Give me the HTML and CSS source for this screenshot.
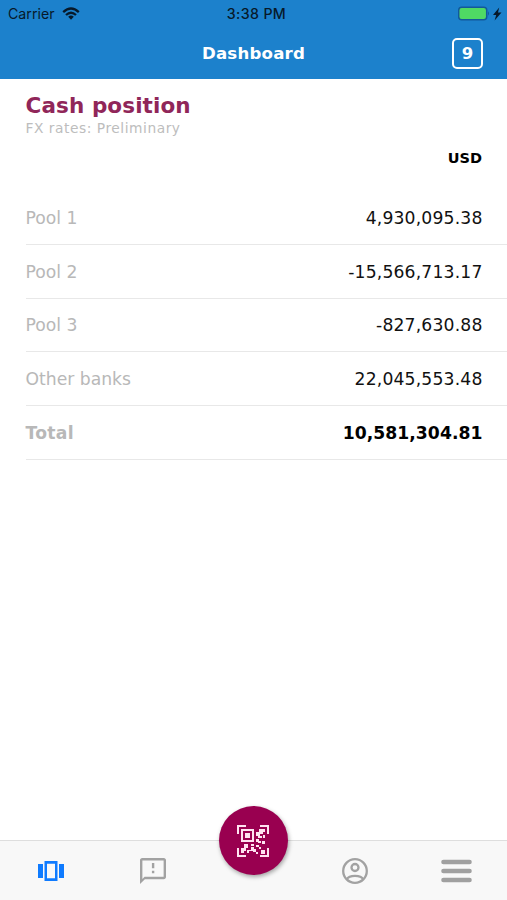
FILE: index.html
```html
<!DOCTYPE html>
<html lang="en">
<head>
  <meta charset="UTF-8" />
  <meta name="viewport" content="width=device-width, initial-scale=1.0" />
  <title>Dashboard</title>
  <link rel="stylesheet" href="styles.css">
</head>
<body>
  <header class="header">
    <div class="status">
      <div class="carrier">
        <span>Carrier</span>
        <svg width="18" height="13" viewBox="0 0 18 13" fill="none" stroke="#07192a" stroke-width="2.3">
          <path d="M1.2 5.1Q9 -2 16.8 5.1" />
          <path d="M4 8Q9 3.5 14 8" />
          <path d="M6.2 9.8Q9 7.3 11.8 9.8L9 12.7Z" fill="#07192a" stroke="none" />
        </svg>
      </div>
      <div class="time">3:38 PM</div>
      <div class="power">
        <svg width="44" height="16" viewBox="0 0 44 16">
          <rect x="0.7" y="1.2" width="28" height="12.6" rx="3" fill="#4fd964" stroke="#12599a" stroke-width="1.5" />
          <path d="M30 5.3Q32 7.5 30 9.7Z" fill="#12599a" />
          <path d="M41.2 1.6L35 8.9h3.2L36.600 14.400l6.900-8H40Z" fill="#07192a" />
        </svg>
      </div>
    </div>
    <div class="navbar">
      <h1 class="title">Dashboard</h1>
      <div class="counter">9</div>
    </div>
  </header>

  <main class="content">
    <h2 class="heading">Cash position</h2>
    <div class="subheading">FX rates: Preliminary</div>
    <div class="currency">USD</div>
    <div class="rows">
      <div class="row"><span class="label">Pool 1</span><span class="amount">4,930,095.38</span></div>
      <div class="row"><span class="label">Pool 2</span><span class="amount">-15,566,713.17</span></div>
      <div class="row"><span class="label">Pool 3</span><span class="amount">-827,630.88</span></div>
      <div class="row"><span class="label">Other banks</span><span class="amount">22,045,553.48</span></div>
      <div class="row total"><span class="label">Total</span><span class="amount">10,581,304.81</span></div>
    </div>
  </main>

  <nav class="tabs">
    <div class="tab">
      <svg width="26" height="20" viewBox="0 0 26 20" fill="#0f7bff">
        <rect x="0" y="3" width="5" height="14" />
        <rect x="21" y="3" width="5" height="14" />
        <path fill-rule="evenodd" d="M6.5 0h13v20h-13ZM9 2.7v14.6h8V2.7Z" />
      </svg>
    </div>
    <div class="tab feedback">
      <svg width="26" height="26" viewBox="0 0 24 24" fill="#a2a2a2">
        <path d="M22 0H2C.9 0 0 .9 0 2v22l4.5-4.5H22c1.1 0 2-.9 2-2V2c0-1.1-.9-2-2-2ZM21.8 17.4H4.2l-2 2V2.2h19.6Z" fill-rule="evenodd" />
        <path d="M11 4.5h2.2v5H11ZM11 11.8h2.2V14H11Z" />
      </svg>
    </div>
    <div class="tab scan">
      <div class="scan-button">
        <svg width="32" height="32" viewBox="0 0 32 32" fill="#ffe3f1">
          <path d="M0 0h9v2H2v7H0ZM23 0h9v9h-2V2h-7ZM0 23h2v7h7v2H0ZM30 23h2v9h-9v-2h7Z" />
          <path fill-rule="evenodd" d="M4 4h13v13H4ZM6 6v9h9V6Z" />
          <rect x="8" y="8" width="5" height="5" />
          <path d="M22 4h6v3h-2v2h-3v2h2v2h-4v-2h-2V7h3ZM26 10h2v3h-2ZM19 14h3v2h2v2h-3v-1h-2ZM25 16h3v3h-3ZM7 19h4v4H9v3H7v2H4v-5h3ZM14 19h3v2h-3ZM14 22h3v2h2v3h-3v-1h-4v2h-2v-3h4ZM19 20h3v2h-3ZM22 22h2v2h-2ZM24 25h4v4h-4ZM19 27h2v2h-2Z" />
        </svg>
      </div>
    </div>
    <div class="tab">
      <svg width="26" height="26" viewBox="0 0 26 26" fill="none" stroke="#a2a2a2" stroke-width="2.3">
        <circle cx="13" cy="13" r="11.8" />
        <circle cx="13" cy="9.5" r="3.5" />
        <path d="M5 21Q6.5 17.8 13 17.8T21 21" />
      </svg>
    </div>
    <div class="tab">
      <svg width="31" height="24" viewBox="0 0 31 24" stroke="#a0a0a0" stroke-width="4.6" stroke-linecap="round">
        <path d="M2.5 3H28.5M2.5 12H28.5M2.5 21H28.5" />
      </svg>
    </div>
  </nav>
</body>
</html>
```
FILE: styles.css
```css
* {
  box-sizing: border-box;
}
body {
  margin: 0;
  height: 900px;
  display: flex;
  flex-direction: column;
  background: #fff;
  font-family: Verdana, "DejaVu Sans", sans-serif;
  overflow: hidden;
}
.header {
  height: 79px;
  background: #1c81cc;
  flex: none;
}
.status {
  display: grid;
  grid-template-columns: 1fr auto 1fr;
  align-items: center;
  height: 27px;
  padding: 0 5px 0 8px;
  font-family: Inter, "Liberation Sans", sans-serif;
  font-size: 14.2px;
  color: #07192a;
}
.carrier {
  display: flex;
  align-items: center;
  gap: 7px;
}
.time {
  font-weight: 500;
  letter-spacing: 0.35px;
  padding-left: 3px;
}
.power {
  display: flex;
  justify-content: flex-end;
}
.navbar {
  display: grid;
  grid-template-columns: 1fr auto 1fr;
  align-items: center;
  height: 52px;
  padding: 0 24px;
  color: #fff;
}
.title {
  grid-column: 2;
  margin: 0;
  font-size: 16.6px;
  letter-spacing: 0.2px;
}
.counter {
  justify-self: end;
  width: 31px;
  height: 31px;
  border: 2px solid #fff;
  border-radius: 5px;
  font-size: 16.5px;
  font-weight: bold;
  line-height: 27px;
  text-align: center;
}
.content {
  flex: 1;
  padding: 14px 0 0 25.5px;
}
.heading {
  margin: 0;
  font-size: 21.5px;
  letter-spacing: 0.1px;
  line-height: 26px;
  color: #902659;
}
.subheading {
  font-size: 13.8px;
  letter-spacing: 0.53px;
  line-height: 18px;
  color: #bdbdbd;
}
.currency {
  margin-top: 11px;
  padding-right: 25px;
  font-size: 14.5px;
  font-weight: bold;
  line-height: 20px;
  text-align: right;
}
.rows {
  margin-top: 23px;
}
.row {
  display: flex;
  justify-content: space-between;
  align-items: center;
  height: 53.8px;
  padding: 1px 24.5px 0 0;
  border-bottom: 1px solid #e8e8e8;
  font-size: 17.2px;
}
.label {
  color: #b8b8b8;
}
.amount {
  letter-spacing: 0.17px;
  color: #111;
}
.total {
  font-weight: bold;
}
.total .label {
  letter-spacing: 0.3px;
}
.total .amount {
  letter-spacing: 0.05px;
  color: #000;
}
.tabs {
  flex: none;
  display: grid;
  grid-template-columns: repeat(5, 1fr);
  height: 60px;
  background: #f8f8f8;
  border-top: 1px solid #dedede;
}
.tab {
  display: flex;
  align-items: center;
  justify-content: center;
}
.feedback {
  padding-left: 2px;
}
.scan {
  position: relative;
}
.scan-button {
  position: absolute;
  top: -35px;
  display: flex;
  align-items: center;
  justify-content: center;
  width: 69px;
  height: 69px;
  border-radius: 50%;
  background: #990050;
  box-shadow: 1px 2px 4px rgba(0,0,0,0.35);
}
```
